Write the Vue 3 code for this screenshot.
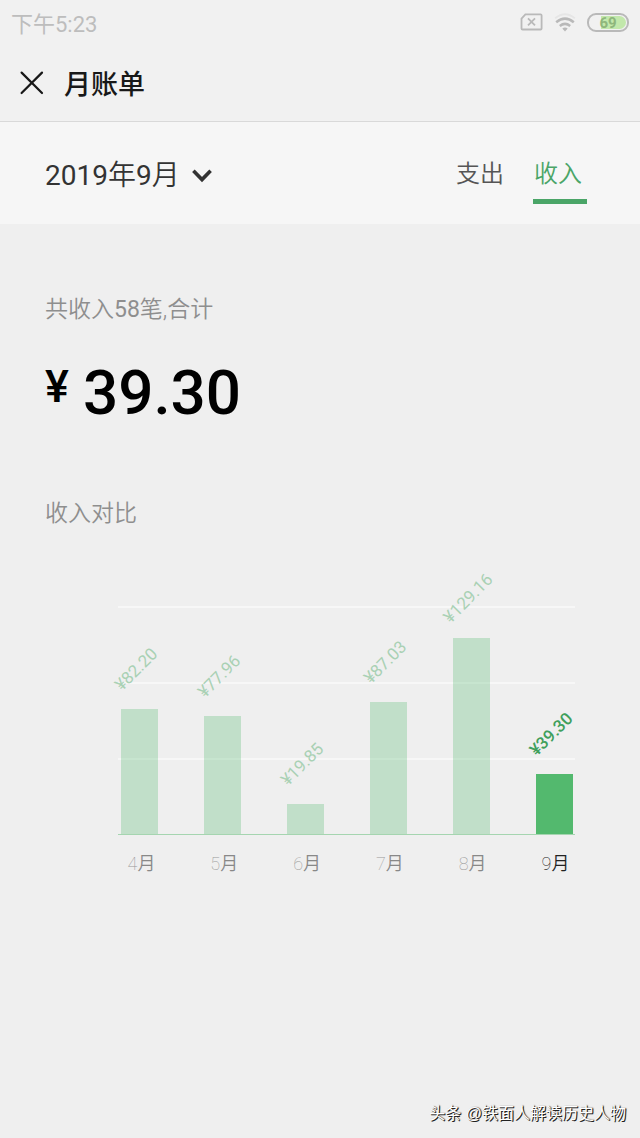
<script setup>
const max = 150
const months = [
  { month: 4, value: '82.20' },
  { month: 5, value: '77.96' },
  { month: 6, value: '19.85' },
  { month: 7, value: '87.03' },
  { month: 8, value: '129.16' },
  { month: 9, value: '39.30', current: true },
]
const barHeight = (m) => `${(Number(m.value) / max) * 100}%`
</script>

<template>
  <div class="page">
    <header class="top">
      <div class="status">
        <span>下午5:23</span>
        <div class="status-icons">
          <svg width="23" height="18" viewBox="0 0 23 18" fill="none" stroke="#b9b9b9" stroke-width="1.8" aria-hidden="true">
            <path d="M5.4 1.3H20.5Q21.6 1.3 21.6 2.4V15.4Q21.6 16.5 20.5 16.5H2.6Q1.5 16.5 1.5 15.4V5.6Z" />
            <path d="M8 5.3L15 12.3M15 5.3L8 12.3" />
          </svg>
          <svg width="22" height="19" viewBox="0 0 22 19" fill="none" aria-hidden="true">
            <path d="M1.2 5.2Q11 -2.8 20.8 5.2" stroke="#e6e6e6" stroke-width="2" />
            <path d="M2.2 9.2Q11 2 19.8 9.2" stroke="#b9b9b9" stroke-width="2.5" />
            <path d="M5.8 12.9Q11 8.9 16.2 12.9" stroke="#b9b9b9" stroke-width="2.5" />
            <path d="M8.3 15.6Q11 13.6 13.7 15.6L11 18.6Z" fill="#b9b9b9" />
          </svg>
          <span class="battery"><span class="charge">69</span></span>
        </div>
      </div>
      <div class="title-bar">
        <button class="close" type="button" aria-label="关闭">
          <svg width="24" height="24" viewBox="0 0 24 24" fill="none" stroke="#181818" stroke-width="2.2" stroke-linecap="round">
            <path d="M1.6 1.6L22 22M22 1.6L1.6 22" />
          </svg>
        </button>
        <h1>月账单</h1>
      </div>
    </header>

    <nav class="filter">
      <button class="date" type="button">
        <span><span class="digits">2019</span>年<span class="digits">9</span>月</span>
        <svg width="20" height="14" viewBox="0 0 20 14" fill="none" stroke="#333" stroke-width="3.6" aria-hidden="true">
          <path d="M1.4 1.8L10 10.6L18.6 1.8" />
        </svg>
      </button>
      <div class="tabs">
        <button class="tab" type="button">支出</button>
        <button class="tab active" type="button">收入</button>
      </div>
    </nav>

    <main>
      <p class="caption">共收入<span class="digits">58</span>笔,合计</p>
      <p class="amount"><span class="yen">¥</span><span>39.30</span></p>
      <h2 class="caption">收入对比</h2>

      <div class="chart">
        <div class="plot">
          <div v-for="m in months" :key="m.month" class="bar" :class="{ current: m.current }" :style="{ height: barHeight(m) }">
            <span class="value">¥{{ m.value }}</span>
          </div>
        </div>
        <div class="months">
          <span v-for="m in months" :key="m.month" class="month" :class="{ current: m.current }"><span class="num">{{ m.month }}</span>月</span>
        </div>
      </div>
    </main>

    <footer>头条 @铁面人解读历史人物</footer>
  </div>
</template>

<style>
body {
  background: #efefef;
}
</style>

<style scoped>
.page {
  min-height: 100vh;
  display: flex;
  flex-direction: column;
  font-family: Roboto, "Noto Sans CJK SC", sans-serif;
  color: #333;
}
button {
  border: 0;
  padding: 0;
  background: none;
  font: inherit;
  color: inherit;
}
svg {
  display: block;
}
h1, h2, p {
  margin: 0;
  font-weight: 400;
}
.digits {
  font-weight: 400;
}
.top {
  background: #f1f1f1;
  border-bottom: 1px solid #d9d9d9;
}
.status {
  display: flex;
  justify-content: space-between;
  align-items: center;
  height: 44px;
  padding: 0 11px;
  font-size: 22px;
  font-weight: 400;
  color: #bdbdbd;
}
.status-icons {
  display: flex;
  align-items: center;
  gap: 11px;
}
.battery {
  box-sizing: border-box;
  width: 42px;
  height: 19px;
  padding: 1px;
  border: 2px solid #b9b9b9;
  border-radius: 9px;
}
.charge {
  display: block;
  height: 13px;
  border-radius: 7px;
  background: linear-gradient(90deg, #f1f1f1 30%, #c2e8ab 30%);
  color: #8eb67c;
  font-size: 15px;
  font-weight: 700;
  line-height: 14px;
  text-align: center;
}
.title-bar {
  display: flex;
  align-items: center;
  gap: 20px;
  height: 77px;
  padding: 0 20px;
}
h1 {
  font-size: 27px;
  font-weight: 500;
  color: #181818;
}
.filter {
  display: flex;
  justify-content: space-between;
  align-items: flex-start;
  height: 102px;
  padding: 0 53px 0 45px;
  box-sizing: border-box;
  background: #f6f6f6;
}
.date {
  display: flex;
  align-items: center;
  gap: 12px;
  margin-top: 33px;
  font-size: 28px;
  font-weight: 350;
  line-height: 42px;
}
.tabs {
  display: flex;
  gap: 24px;
  margin-top: 32px;
}
.tab {
  width: 54px;
  height: 50px;
  box-sizing: border-box;
  padding: 0 0 5px 1px;
  border-bottom: 5px solid transparent;
  font-size: 24px;
  font-weight: 350;
  line-height: 40px;
  text-align: left;
  color: #555;
}
.tab.active {
  color: #4aa567;
  border-color: #4aa567;
}
main {
  flex: 1;
  padding: 69px 45px 0;
}
.caption {
  font-size: 23px;
  line-height: 34px;
  font-weight: 350;
  color: #8e8e8e;
}
.amount {
  display: flex;
  align-items: flex-start;
  gap: 14px;
  margin: 29px 0 67px;
  font-size: 62px;
  line-height: 74px;
  font-weight: 500;
  color: #000;
}
.yen {
  font-size: 45px;
  line-height: 62px;
}
.chart {
  margin: 75px 20px 0 73px;
}
.plot {
  display: flex;
  justify-content: space-between;
  align-items: flex-end;
  height: 228px;
  padding: 0 2px 0 3px;
  background: linear-gradient(#f7f7f7 2px, transparent 2px) 0 0 / 100% 76px;
  border-bottom: 1px solid #a5d5b0;
}
.bar {
  position: relative;
  width: 37px;
  background: rgba(83, 185, 110, 0.29);
}
.bar.current {
  background: #53b96e;
}
.value {
  position: absolute;
  left: 50%;
  top: -40px;
  transform: translate(-50%, -50%) rotate(-45deg);
  margin-left: -4px;
  font-size: 17px;
  line-height: 20px;
  color: #a9d1b4;
}
.current .value {
  color: #3fa05c;
  font-weight: 500;
}
.months {
  display: flex;
  justify-content: space-between;
  padding: 15px 1px 0 5px;
}
.month {
  width: 37px;
  font-size: 18px;
  line-height: 28px;
  font-weight: 350;
  text-align: center;
  color: #888;
}
.num {
  color: #999;
  font-weight: 100;
}
.month.current, .current .num {
  color: #222;
}
footer {
  padding: 0 14px 12px;
  font-family: "Liberation Sans", "Noto Sans CJK SC", sans-serif;
  font-size: 16px;
  line-height: 24px;
  text-align: right;
  color: #fff;
  text-shadow: 1px 1px 0 #222, 1px 0 1px #444;
}
</style>
